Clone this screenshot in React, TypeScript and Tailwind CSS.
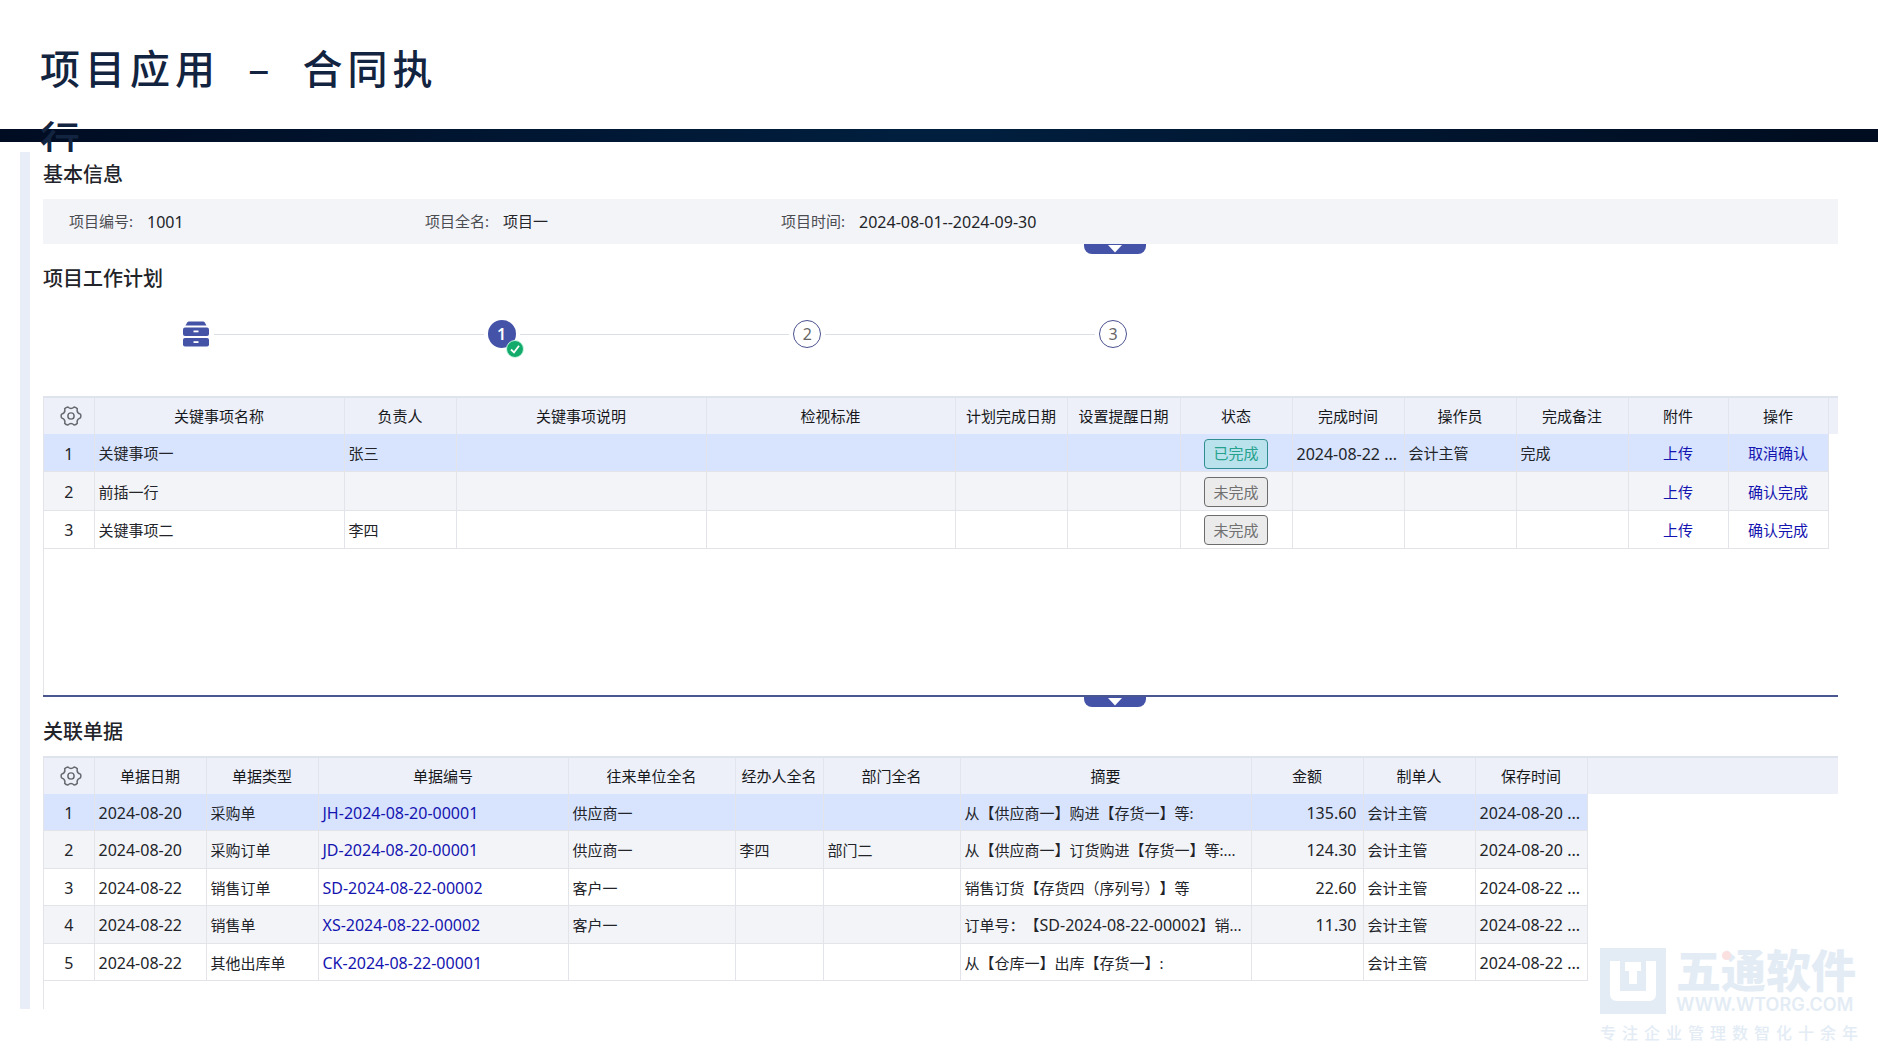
import type { ReactNode } from "react";

type Column = { title: string; width: number };

const planColumns: Column[] = [
  { title: "关键事项名称", width: 250 },
  { title: "负责人", width: 112 },
  { title: "关键事项说明", width: 250 },
  { title: "检视标准", width: 249 },
  { title: "计划完成日期", width: 112 },
  { title: "设置提醒日期", width: 113 },
  { title: "状态", width: 112 },
  { title: "完成时间", width: 112 },
  { title: "操作员", width: 112 },
  { title: "完成备注", width: 112 },
  { title: "附件", width: 100 },
  { title: "操作", width: 100 },
];

const planRows = [
  { name: "关键事项一", owner: "张三", done: true, time: "2024-08-22 ...", operator: "会计主管", note: "完成" },
  { name: "前插一行", owner: "", done: false, time: "", operator: "", note: "" },
  { name: "关键事项二", owner: "李四", done: false, time: "", operator: "", note: "" },
];

const docColumns: Column[] = [
  { title: "单据日期", width: 112 },
  { title: "单据类型", width: 112 },
  { title: "单据编号", width: 250 },
  { title: "往来单位全名", width: 167 },
  { title: "经办人全名", width: 88 },
  { title: "部门全名", width: 137 },
  { title: "摘要", width: 291 },
  { title: "金额", width: 112 },
  { title: "制单人", width: 112 },
  { title: "保存时间", width: 112 },
];

const docRows = [
  { date: "2024-08-20", type: "采购单", code: "JH-2024-08-20-00001", partner: "供应商一", agent: "", dept: "", summary: "从【供应商一】购进【存货一】等:", amount: "135.60", saved: "2024-08-20 ..." },
  { date: "2024-08-20", type: "采购订单", code: "JD-2024-08-20-00001", partner: "供应商一", agent: "李四", dept: "部门二", summary: "从【供应商一】订货购进【存货一】等:...", amount: "124.30", saved: "2024-08-20 ..." },
  { date: "2024-08-22", type: "销售订单", code: "SD-2024-08-22-00002", partner: "客户一", agent: "", dept: "", summary: "销售订货【存货四（序列号）】等", amount: "22.60", saved: "2024-08-22 ..." },
  {
    date: "2024-08-22",
    type: "销售单",
    code: "XS-2024-08-22-00002",
    partner: "客户一",
    agent: "",
    dept: "",
    summary: (
      <>
        订单号：【<span className="text-base leading-5">SD-2024-08-22-00002</span>】销...
      </>
    ),
    amount: "11.30",
    saved: "2024-08-22 ...",
  },
  { date: "2024-08-22", type: "其他出库单", code: "CK-2024-08-22-00001", partner: "", agent: "", dept: "", summary: "从【仓库一】出库【存货一】:", amount: "", saved: "2024-08-22 ..." },
];

const info = [
  { label: "项目编号:", value: "1001", numeric: true },
  { label: "项目全名:", value: "项目一", numeric: false },
  { label: "项目时间:", value: "2024-08-01--2024-09-30", numeric: true },
];

function GearIcon() {
  return (
    <svg viewBox="0 0 24 24" className="w-[22px] h-[22px]" fill="none" stroke="#66686e" strokeWidth="1.6" strokeLinejoin="round">
      <path d="M22.3 10 Q23.2 12 22.3 14 Q17.7 15.3 18.9 19.9 Q17.6 21.700 15.4 21.9 Q12 18.6 8.6 21.9 Q6.4 21.700 5.1 19.9 Q6.3 15.3 1.7 14 Q0.8 12 1.7 10 Q6.3 8.7 5.1 4.1 Q6.4 2.3 8.6 2.1 Q12 5.4 15.4 2.1 Q17.6 2.3 18.9 4.1 Q17.7 8.7 22.3 10 Z" />
      <circle cx="12" cy="12" r="3.400" />
    </svg>
  );
}

function CabinetIcon() {
  return (
    <svg viewBox="0 0 28 28" className="w-7 h-7" fill="#4453a6">
      <path d="M7 1.500 h14 q1.200 0 1.800 1 l1.700 3 h-21 l1.700 -3 q0.600 -1 1.800 -1 z" />
      <rect x="1" y="7.500" width="26" height="8.500" rx="2" />
      <rect x="1" y="18" width="26" height="8.500" rx="2" />
      <rect x="11.500" y="10.500" width="5" height="1.800" fill="#fff" />
      <rect x="11.500" y="21.200" width="5" height="1.800" fill="#fff" />
    </svg>
  );
}

function CollapseTab({ label }: { label: string }) {
  return (
    <button
      aria-label={label}
      className="ml-[58%] flex h-[10px] w-[62px] items-center justify-center rounded-b-lg bg-[#4453a8]"
    >
      <svg viewBox="0 0 16 8" className="h-2 w-4" fill="#fff">
        <path d="M1 0 H15 L8 7.500 Z" />
      </svg>
    </button>
  );
}

function StepLine() {
  return <li aria-hidden="true" className="mx-1 h-px flex-1 bg-[#dcdfe6]" />;
}

function Step({ value, active }: { value: number; active?: boolean }) {
  return (
    <li
      className={
        active
          ? "relative flex h-7 w-7 items-center justify-center rounded-full bg-[#4453a8] text-base font-semibold text-white"
          : "flex h-7 w-7 items-center justify-center rounded-full border border-[#4a528f] text-base text-[#666]"
      }
    >
      {value}
      {active && (
        <svg viewBox="0 0 18 18" className="absolute -right-2 -bottom-2.5 h-[18px] w-[18px]">
          <circle cx="9" cy="9" r="8.500" fill="#12ab6b" stroke="#c9f5e2" />
          <path d="M5 9.500 L8 12.500 L13 5.800" fill="none" stroke="#fff" strokeWidth="1.800" />
        </svg>
      )}
    </li>
  );
}

function HeadRow({ columns }: { columns: Column[] }) {
  return (
    <thead>
      <tr className="h-9 bg-[#edf0f8] text-[#17181c]">
        <th aria-label="设置" className="h-9 border-r border-[#e2e5ee] p-0">
          <div className="flex justify-center pl-1">
            <GearIcon />
          </div>
        </th>
        {columns.map((col) => (
          <th key={col.title} className="h-9 border-r border-[#e2e5ee] p-0 font-normal">
            {col.title}
          </th>
        ))}
        <th className="h-9 p-0" />
      </tr>
    </thead>
  );
}

function Cols({ columns }: { columns: Column[] }) {
  return (
    <colgroup>
      <col style={{ width: 50 }} />
      {columns.map((col) => (
        <col key={col.title} style={{ width: col.width }} />
      ))}
      <col />
    </colgroup>
  );
}

function Cell({ children, className = "" }: { children?: ReactNode; className?: string }) {
  return (
    <td className={`overflow-hidden whitespace-nowrap border-r border-b border-[#e2e4ea] px-1 pt-[2px] pb-0 ${className}`}>
      {children}
    </td>
  );
}

function rowColor(index: number) {
  if (index === 0) return "bg-[#d8e4fe]";
  return index % 2 === 1 ? "bg-[#f3f4f8]" : "bg-white";
}

function StatusTag({ done }: { done: boolean }) {
  return (
    <span
      className={
        done
          ? "inline-flex h-[30px] w-16 items-center justify-center rounded-sm border border-[#2f8f90] bg-[#b9e2ec] text-[#25a18c]"
          : "inline-flex h-[30px] w-16 items-center justify-center rounded-sm border border-[#6c6c6c] bg-[#ebebec] text-[#707070]"
      }
    >
      {done ? "已完成" : "未完成"}
    </span>
  );
}

function Watermark() {
  return (
    <div className="pointer-events-none absolute right-4 bottom-3.5 z-30 w-[262px] text-[#e3ecf5]">
      <div className="flex items-center gap-[10px]">
        <svg viewBox="0 0 66 66" className="h-[66px] w-[66px] shrink-0">
          <rect width="66" height="66" fill="#e3ecf5" />
          <path d="M10 13 H20 V43 H46 V13 H56 V46 Q56 53 49 53 H17 Q10 53 10 46 Z" fill="#fff" />
          <path d="M25 14 H41 V23 H37 V36 H29 V23 H25 Z" fill="#fff" />
        </svg>
        <div className="relative">
          <div className="text-[45px] leading-[48px] font-black whitespace-nowrap">五通软件</div>
          <span className="absolute top-1 left-[46px] h-[9px] w-[9px] rounded-full bg-[#fbe0e0]" />
          <div className="font-['Inter',sans-serif] text-lg leading-5 font-semibold">WWW.WTORG.COM</div>
        </div>
      </div>
      <div className="mt-1.5 text-base leading-6 font-medium tracking-[6px] whitespace-nowrap">专注企业管理数智化十余年</div>
    </div>
  );
}

export default function App() {
  return (
    <div className="relative min-h-screen overflow-hidden bg-white pb-[50px] font-['Noto_Sans','Noto_Sans_CJK_SC',sans-serif] text-[15px] text-[#222429] [text-spacing-trim:space-all]">
      <header className="h-[129px] px-10 pt-8">
        <h1 className="relative z-10 max-w-[420px] font-['Noto_Sans_CJK_SC',sans-serif] text-[40px] leading-[71px] font-medium tracking-[5px] text-[#12243f]">
          {"项目应用\u00a0 –\u00a0 合同执行"}
        </h1>
      </header>
      <div className="h-[13px] bg-linear-to-r from-[#000c22] via-[#001f3f] to-[#000c1f]" />

      <main className="relative z-20 mt-[10px] mr-10 ml-5 border-l-[10px] border-[#e9edf8] bg-white pl-[13px]">
        <section>
          <h2 className="h-[47px] text-xl leading-[46px] font-medium">基本信息</h2>
          <dl className="flex h-[45px] items-center bg-[#f3f4f8] pl-[26px]">
            {info.map((item) => (
              <div key={item.label} className="flex w-[356px] items-center gap-[14px]">
                <dt className="text-[#4a4c52]">{item.label}</dt>
                <dd className={item.numeric ? "text-base" : ""}>{item.value}</dd>
              </div>
            ))}
          </dl>
          <CollapseTab label="展开基本信息" />
        </section>

        <section>
          <h2 className="h-[66px] pt-[10px] text-xl leading-[30px] font-medium">项目工作计划</h2>
          <ol className="ml-[139px] flex w-[945px] items-center">
            <li>
              <CabinetIcon />
            </li>
            <StepLine />
            <Step value={1} active />
            <StepLine />
            <Step value={2} />
            <StepLine />
            <Step value={3} />
          </ol>

          <div className="mt-12 h-[299px] border-t-2 border-l border-t-[#dfe3ec] border-l-[#e2e4ea]">
            <table className="h-[151px] w-full table-fixed border-collapse">
              <Cols columns={planColumns} />
              <HeadRow columns={planColumns} />
              <tbody>
                {planRows.map((row, i) => (
                  <tr key={row.name}>
                    <Cell className={`text-center text-base ${rowColor(i)}`}>{i + 1}</Cell>
                    <Cell className={rowColor(i)}>{row.name}</Cell>
                    <Cell className={rowColor(i)}>{row.owner}</Cell>
                    <Cell className={rowColor(i)} />
                    <Cell className={rowColor(i)} />
                    <Cell className={rowColor(i)} />
                    <Cell className={rowColor(i)} />
                    <Cell className={`text-center ${rowColor(i)}`}>
                      <div className="flex justify-center">
                        <StatusTag done={row.done} />
                      </div>
                    </Cell>
                    <Cell className={`text-base ${rowColor(i)}`}>{row.time}</Cell>
                    <Cell className={rowColor(i)}>{row.operator}</Cell>
                    <Cell className={rowColor(i)}>{row.note}</Cell>
                    <Cell className={`text-center ${rowColor(i)}`}>
                      <a href="#upload" className="text-[#1414b0]">上传</a>
                    </Cell>
                    <Cell className={`text-center ${rowColor(i)}`}>
                      <a href="#confirm" className="text-[#1414b0]">{row.done ? "取消确认" : "确认完成"}</a>
                    </Cell>
                    <td />
                  </tr>
                ))}
              </tbody>
            </table>
          </div>
          <div className="h-[2px] bg-[#4a5690]" />
          <CollapseTab label="展开工作计划" />
        </section>

        <section>
          <h2 className="h-[49px] pt-[10px] text-xl leading-[30px] font-medium">关联单据</h2>
          <div className="h-[253px] border-t-2 border-l border-t-[#dfe3ec] border-l-[#e2e4ea]">
            <table className="h-[223px] w-full table-fixed border-collapse">
              <Cols columns={docColumns} />
              <HeadRow columns={docColumns} />
              <tbody>
                {docRows.map((row, i) => (
                  <tr key={row.code}>
                    <Cell className={`text-center text-base ${rowColor(i)}`}>{i + 1}</Cell>
                    <Cell className={`text-base ${rowColor(i)}`}>{row.date}</Cell>
                    <Cell className={rowColor(i)}>{row.type}</Cell>
                    <Cell className={`text-base ${rowColor(i)}`}>
                      <a href={`#${row.code}`} className="text-[#1414b0]">{row.code}</a>
                    </Cell>
                    <Cell className={rowColor(i)}>{row.partner}</Cell>
                    <Cell className={rowColor(i)}>{row.agent}</Cell>
                    <Cell className={rowColor(i)}>{row.dept}</Cell>
                    <Cell className={rowColor(i)}>{row.summary}</Cell>
                    <Cell className={`pr-1.5 text-right text-base ${rowColor(i)}`}>{row.amount}</Cell>
                    <Cell className={rowColor(i)}>会计主管</Cell>
                    <Cell className={`text-base ${rowColor(i)}`}>{row.saved}</Cell>
                    <td />
                  </tr>
                ))}
              </tbody>
            </table>
          </div>
        </section>
      </main>

      <Watermark />
    </div>
  );
}
